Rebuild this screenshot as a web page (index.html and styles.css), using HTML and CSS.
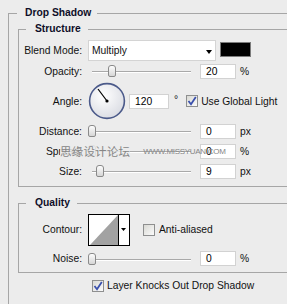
FILE: index.html
```html
<!DOCTYPE html>
<html lang="en">
<head>
	<meta charset="UTF-8">
	<title>Drop Shadow</title>
	<link rel="stylesheet" href="styles.css">
</head>
<body>

<div class="panel">
	<fieldset class="outer">
		<legend>Drop Shadow</legend>

		<fieldset class="inner">
			<legend>Structure</legend>

			<div class="row blend">
				<label>Blend Mode:</label>
				<div class="controls">
					<div class="select">Multiply<span class="arrow"></span></div>
					<div class="swatch"></div>
				</div>
			</div>

			<div class="row">
				<label>Opacity:</label>
				<div class="controls">
					<div class="slider"><span class="thumb" style="left: 20px"></span></div>
					<div class="field">20</div>
					<span class="unit">%</span>
				</div>
			</div>

			<div class="row angle">
				<label>Angle:</label>
				<div class="controls">
					<svg class="dial" width="38" height="38" viewBox="0 0 38 38">
						<defs>
							<radialGradient id="dialFill" cx="40%" cy="35%" r="70%">
								<stop offset="0" stop-color="#ffffff"/>
								<stop offset="1" stop-color="#d9dbe2"/>
							</radialGradient>
						</defs>
						<circle cx="19" cy="19" r="17.4" fill="url(#dialFill)" stroke="#4b5a8a" stroke-width="1.6"/>
						<line x1="19" y1="19" x2="10" y2="7" stroke="#000" stroke-width="1.2"/>
						<circle cx="19" cy="19" r="1.6" fill="#000"/>
					</svg>
					<div class="field wide">120</div>
					<span class="degree">°</span>
					<span class="checkline global">
						<span class="check on"><svg width="10" height="10" viewBox="0 0 10 10"><polyline points="1.5,5 4,8.2 8.8,1" fill="none" stroke="#3a50ad" stroke-width="1.8"/></svg></span>
						Use Global Light
					</span>
				</div>
			</div>

			<div class="row">
				<label>Distance:</label>
				<div class="controls">
					<div class="slider"><span class="thumb" style="left: 0px"></span></div>
					<div class="field">0</div>
					<span class="unit">px</span>
				</div>
			</div>

			<div class="row spread">
				<label>Spread:</label>
				<div class="controls">
					<div class="slider"><span class="thumb" style="left: 0px"></span></div>
					<div class="field">0</div>
					<span class="unit">%</span>
				</div>
				<div class="watermark">
					<span class="wm-cn">思缘设计论坛</span>
					<span class="wm-url">www.missyuan.com</span>
				</div>
			</div>

			<div class="row">
				<label>Size:</label>
				<div class="controls">
					<div class="slider"><span class="thumb" style="left: 8px"></span></div>
					<div class="field">9</div>
					<span class="unit">px</span>
				</div>
			</div>
		</fieldset>

		<fieldset class="inner quality">
			<legend>Quality</legend>

			<div class="row contour">
				<label>Contour:</label>
				<div class="controls">
					<svg class="curve" width="42" height="32" viewBox="0 0 42 32">
						<rect x="0.5" y="0.5" width="41" height="31" fill="#fff" stroke="#000"/>
						<polygon points="2,31 30,1 30,31" fill="#a2a2a2"/>
						<line x1="30.5" y1="0" x2="30.5" y2="32" stroke="#000"/>
						<polygon points="33,14 38,14 35.5,17" fill="#000"/>
					</svg>
					<span class="checkline anti">
						<span class="check"></span>
						Anti-aliased
					</span>
				</div>
			</div>

			<div class="row noise">
				<label>Noise:</label>
				<div class="controls">
					<div class="slider"><span class="thumb" style="left: 0px"></span></div>
					<div class="field">0</div>
					<span class="unit">%</span>
				</div>
			</div>
		</fieldset>

		<div class="checkline knock">
			<span class="check on"><svg width="10" height="10" viewBox="0 0 10 10"><polyline points="1.5,5 4,8.2 8.8,1" fill="none" stroke="#3a50ad" stroke-width="1.8"/></svg></span>
			Layer Knocks Out Drop Shadow
		</div>
	</fieldset>
</div>

</body>
</html>
```

FILE: styles.css
```css
*{
	box-sizing: border-box;
}
body{
	margin: 0;
	background-color: #ececec;
	font-family: "Liberation Sans", Arial, sans-serif;
	font-size: 10.3px;
	color: #111;
	overflow: hidden;
}
.panel{
	width: 340px;
}

fieldset{
	margin: 0;
	padding: 0;
	border: 1px solid #a6a6a6;
	min-width: 0;
}
legend{
	font-weight: bold;
	line-height: 12px;
	color: #0e0e28;
}
.outer{
	margin: 7px 0 0 8px;
	padding: 4px 9px 30px 9px;
}
.outer > legend{
	margin-left: -1px;
	padding: 0 6px 0 8px;
}
.inner{
	padding: 5px 0 5px 0;
}
.inner > legend{
	margin-left: 7px;
	padding: 0 7px 0 9px;
}
.quality{
	margin-top: 10px;
	padding: 4px 0 1px 0;
}

/* rows */
.row{
	position: relative;
	display: grid;
	grid-template-columns: 63px auto;
	column-gap: 6px;
	align-items: center;
	height: 20px;
}
.row > label{
	text-align: right;
	white-space: nowrap;
}
.row.blend{
	height: 21px;
}
.row.angle{
	height: 40px;
}
.row.contour{
	height: 33px;
}
.row.noise{
	height: 25px;
}
.controls{
	display: flex;
	align-items: center;
}

/* blend mode */
.select{
	position: relative;
	width: 128px;
	height: 21px;
	padding-left: 3px;
	line-height: 19px;
	background: #fff;
	border: 1px solid #d4d4d4;
}
.select .arrow{
	position: absolute;
	right: 3px;
	top: 9px;
	border-left: 3.5px solid transparent;
	border-right: 3.5px solid transparent;
	border-top: 4px solid #000;
}
.swatch{
	align-self: flex-start;
	width: 31px;
	height: 15px;
	margin: 2px 0 0 4px;
	background: #000;
	border: 1px solid #7c7c7c;
}

/* sliders and fields */
.slider{
	position: relative;
	width: 104px;
	height: 14px;
	margin-right: 8px;
}
.slider::before{
	content: "";
	position: absolute;
	left: 4px;
	right: 1px;
	top: 7px;
	height: 1px;
	background: #a9a9a9;
	box-shadow: 0 1px 0 #fff;
}
.thumb{
	position: absolute;
	top: 1px;
	width: 8px;
	height: 12px;
	border: 1px solid #8a8a8a;
	border-radius: 3px 3px 2px 2px;
	background: linear-gradient(#fdfdfd, #d6d6d6);
}
.field{
	width: 36px;
	height: 15px;
	padding-left: 5px;
	line-height: 13px;
	background: #fff;
	border: 1px solid #d2d2d2;
	color: #000;
}
.field.wide{
	width: 40px;
}
.unit{
	margin-left: 4px;
}

/* angle */
.dial{
	display: block;
	margin-right: 3px;
}
.degree{
	margin-left: 5px;
	margin-top: -3px;
}

/* checkboxes */
.checkline{
	display: flex;
	align-items: center;
	gap: 3px;
	white-space: nowrap;
}
.check{
	display: inline-flex;
	align-items: center;
	justify-content: center;
	width: 12px;
	height: 12px;
	border: 1px solid #8e8f8f;
	background: linear-gradient(135deg, #d9d9d4, #fbfbfb);
}
.global{
	margin-left: 8px;
}
.anti{
	margin-left: 13px;
	gap: 4px;
}
.knock{
	height: 13px;
	margin: 6px 0 0 74px;
}

/* contour */
.curve{
	display: block;
}

/* watermark over the spread row */
.watermark{
	position: absolute;
	left: 41px;
	top: 4px;
	display: flex;
	align-items: center;
	color: #868686;
}
.wm-cn{
	font-family: "Noto Sans CJK SC", sans-serif;
	font-size: 11.5px;
	line-height: 12px;
	letter-spacing: 0.2px;
	background: rgba(236, 236, 236, 0.85);
}
.wm-url{
	margin-left: 13px;
	font-size: 8px;
	letter-spacing: -0.3px;
	text-transform: uppercase;
}
```
